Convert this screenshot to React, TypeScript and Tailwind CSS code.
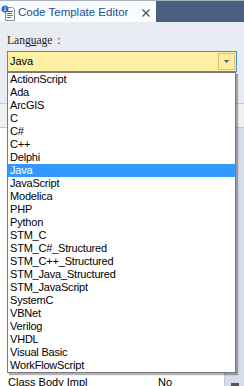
import React from "react";

const items = [
  "ActionScript",
  "Ada",
  "ArcGIS",
  "C",
  "C#",
  "C++",
  "Delphi",
  "Java",
  "JavaScript",
  "Modelica",
  "PHP",
  "Python",
  "STM_C",
  "STM_C#_Structured",
  "STM_C++_Structured",
  "STM_Java_Structured",
  "STM_JavaScript",
  "SystemC",
  "VBNet",
  "Verilog",
  "VHDL",
  "Visual Basic",
  "WorkFlowScript",
];

function TabIcon() {
  return (
    <svg width="16" height="16" viewBox="0 0 16 16" className="shrink-0">
      <path d="M4.5 2.5h7l2 2v11h-9z" fill="#ffffff" stroke="#8a8f99" strokeWidth="1" />
      <rect x="6" y="6" width="6" height="1" fill="#8b3fb8" />
      <rect x="6" y="8" width="5" height="1" fill="#2f6fcf" />
      <rect x="6" y="10" width="6" height="1" fill="#3aa64a" />
      <rect x="6" y="12" width="4" height="1" fill="#8b3fb8" />
      <circle cx="4" cy="4" r="3.5" fill="#2a6cc6" />
      <rect x="3.5" y="1.8" width="1" height="1" fill="#ffffff" />
      <rect x="3.5" y="3.3" width="1" height="3" fill="#ffffff" />
    </svg>
  );
}

export default function App() {
  return (
    <div className="relative w-[244px] h-[386px] overflow-hidden bg-[#e9ecf3] flex flex-col font-['Liberation_Sans',Arial,sans-serif]">
      {/* tab bar */}
      <div className="flex h-[22px] shrink-0 border-t border-[#a9b1c1]">
        <div className="w-[156px] bg-[#fafbfc] flex items-center pl-[1px] pt-[2px]">
          <TabIcon />
          <span className="ml-[1px] text-[11.5px] leading-[13px] text-[#1d4f91] whitespace-nowrap">
            Code Template Editor
          </span>
          <svg width="8" height="8" viewBox="0 0 8 8" className="ml-auto mr-[6px]">
            <path d="M0.5 0.5L7.5 7.5M7.5 0.5L0.5 7.5" stroke="#555" strokeWidth="1.4" />
          </svg>
        </div>
        <div className="flex-1 bg-[#4b5f82]" />
      </div>

      {/* panel */}
      <div className="px-[7px] shrink-0">
        <div className="mt-[12px] text-[11.5px] leading-[13px] text-[#1e1e1e] font-['Liberation_Serif',serif] whitespace-nowrap">
          Lang<span className="underline">u</span>age<span className="ml-[5px]">:</span>
        </div>
        <div className="mt-[4px] h-[21px] border border-[#3a8ee6] bg-[#fdf0a5] flex items-center pl-[2px]">
          <span className="text-[11px] leading-[13px] text-black">Java</span>
          <div className="ml-auto mr-[1px] w-[17px] h-[17px] border border-[#e2c268] bg-[#fdeea0] flex items-center justify-center">
            <svg width="5" height="3" viewBox="0 0 5 3">
              <path d="M0 0h5L2.5 3z" fill="#555" />
            </svg>
          </div>
        </div>
      </div>

      {/* property grid behind the dropdown */}
      <div className="mt-[31px] flex-1 flex flex-col">
        <div className="h-[25px] shrink-0 bg-[#f0f0f0] border-y border-[#c3c8d2]" />
        <div className="flex-1 flex">
          <div className="flex-1 bg-white flex flex-col justify-end">
            <div className="h-[13px] mb-[-3px] flex text-[11px] leading-[13px] text-black whitespace-nowrap">
              <span className="pl-[8px] w-[158px]">Class Body Impl</span>
              <span>No</span>
            </div>
          </div>
          <div className="w-[20px] bg-[#d6dcea] border-l border-[#c3c9d6] flex flex-col justify-end items-center">
            <div className="w-[8px] h-[3px] bg-[#555]" />
          </div>
        </div>
      </div>

      {/* dropdown list overlay */}
      <div className="absolute left-[7px] top-[72px] w-[229px] bg-white border border-[#7a7a7a] shadow-[2px_2px_1px_rgba(0,0,0,0.3)]">
        {items.map((it) => (
          <div
            key={it}
            className={
              it === "Java"
                ? "h-[13px] pl-[2px] text-[11px] leading-[13px] tracking-[-0.2px] bg-[#3399ff] text-white whitespace-nowrap"
                : "h-[13px] pl-[2px] text-[11px] leading-[13px] tracking-[-0.2px] text-black whitespace-nowrap"
            }
          >
            {it}
          </div>
        ))}
      </div>
    </div>
  );
}
